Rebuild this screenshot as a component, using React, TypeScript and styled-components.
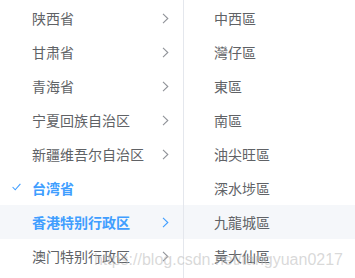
import React from 'react'
import styled, { createGlobalStyle } from 'styled-components'

const GlobalStyle = createGlobalStyle`
  html, body {
    margin: 0;
    padding: 0;
    background: #fff;
  }
  body {
    font-family: "Noto Sans CJK SC", "Noto Sans", sans-serif;
  }
`

const Cascader = styled.div`
  position: relative;
  display: flex;
  width: 355px;
  height: 278px;
  overflow: hidden;
  background: #fff;
`

const Menu = styled.ul<{ $width?: number; $divider?: boolean }>`
  list-style: none;
  margin: 0;
  padding: 1px 0 0;
  width: ${p => (p.$width ? `${p.$width}px` : 'auto')};
  flex: ${p => (p.$width ? 'none' : '1')};
  border-right: ${p => (p.$divider ? '1px solid #e4e7ed' : 'none')};
`

const Node = styled.li<{ $active?: boolean; $hover?: boolean; $indent: number; $hant?: boolean }>`
  position: relative;
  display: flex;
  align-items: center;
  justify-content: space-between;
  height: 34px;
  padding: 0 14px 0 ${p => p.$indent}px;
  font-family: ${p => (p.$hant ? '"Noto Sans CJK TC"' : '"Noto Sans CJK SC"')}, sans-serif;
  font-size: 14px;
  color: ${p => (p.$active ? '#409eff' : '#606266')};
  font-weight: ${p => (p.$active ? 700 : 400)};
  background: ${p => (p.$hover ? '#f5f7fa' : 'transparent')};
  white-space: nowrap;
`

const Check = styled.svg`
  position: absolute;
  left: 12px;
  top: 12px;
`

const Watermark = styled.div`
  position: absolute;
  right: 12px;
  bottom: 9px;
  font-family: "Liberation Sans", Arial, sans-serif;
  font-size: 16px;
  color: rgba(185, 185, 185, 0.55);
  pointer-events: none;
`

const Chevron = ({ color }: { color: string }) => (
  <svg width="7" height="11" viewBox="0 0 7 11">
    <polyline points="1,0.8 5.8,5.5 1,10.2" fill="none" stroke={color} strokeWidth="1.1" />
  </svg>
)

type Prov = { name: string; active?: boolean; hover?: boolean; checked?: boolean; leaf?: boolean }

const provinces: Prov[] = [
  { name: '陕西省' },
  { name: '甘肃省' },
  { name: '青海省' },
  { name: '宁夏回族自治区' },
  { name: '新疆维吾尔自治区' },
  { name: '台湾省', active: true, checked: true, leaf: true },
  { name: '香港特别行政区', active: true, hover: true },
  { name: '澳门特别行政区' },
]

const districts = ['中西區', '灣仔區', '東區', '南區', '油尖旺區', '深水埗區', '九龍城區', '黃大仙區']

export default function App() {
  return (
    <>
      <GlobalStyle />
      <Cascader>
        <Menu $width={183} $divider>
          {provinces.map(p => (
            <Node key={p.name} $indent={32} $active={p.active} $hover={p.hover}>
              {p.checked && (
                <Check width="9" height="8" viewBox="0 0 9 8">
                  <polyline points="0.6,4 3.2,6.8 8.4,0.8" fill="none" stroke="#409eff" strokeWidth="1.1" />
                </Check>
              )}
              <span>{p.name}</span>
              {!p.leaf && <Chevron color={p.active ? '#409eff' : '#909399'} />}
            </Node>
          ))}
        </Menu>
        <Menu>
          {districts.map((d, i) => (
            <Node key={d} $indent={30} $hover={i === 6} $hant lang="zh-Hant">
              <span>{d}</span>
            </Node>
          ))}
        </Menu>
        <Watermark>https://blog.csdn.net/tangyuan0217</Watermark>
      </Cascader>
    </>
  )
}
